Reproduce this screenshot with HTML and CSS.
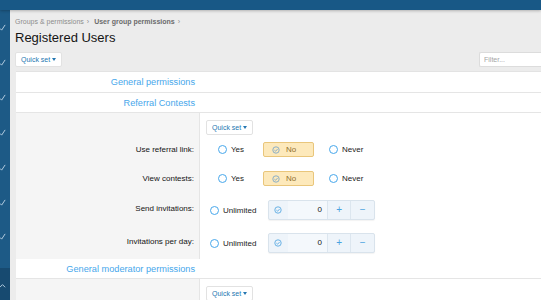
FILE: index.html
```html
<!DOCTYPE html>
<html lang="en">
<head>
    <meta charset="UTF-8">
    <title>Registered Users - User group permissions</title>
    <link rel="stylesheet" href="styles.css">
</head>
<body>
    <div class="topbar"></div>
    <div class="page">
        <aside class="sidebar">
            <ul class="nav">
                <li><svg viewBox="0 0 8 8"><path d="M1 5 L3 7 L7 1"/></svg></li>
                <li><svg viewBox="0 0 8 8"><path d="M1 5 L3 7 L7 1"/></svg></li>
                <li><svg viewBox="0 0 8 8"><path d="M1 5 L3 7 L7 1"/></svg></li>
                <li><svg viewBox="0 0 8 8"><path d="M1 5 L3 7 L7 1"/></svg></li>
                <li><svg viewBox="0 0 8 8"><path d="M1 5 L3 7 L7 1"/></svg></li>
                <li class="short"><svg viewBox="0 0 8 8"><path d="M1 5 L3 7 L7 1"/></svg></li>
                <li><svg viewBox="0 0 8 8"><path d="M1 5 L3 7 L7 1"/></svg></li>
            </ul>
            <div class="nav-open"><svg viewBox="0 0 8 8"><path d="M1 6 L4 3 L7 6"/></svg></div>
        </aside>

        <main class="content">
            <div class="breadcrumb">
                <a href="#">Groups &amp; permissions</a><span class="sep">›</span>
                <a href="#" class="strong">User group permissions</a><span class="sep">›</span>
            </div>
            <h1>Registered Users</h1>

            <div class="toolbar">
                <button class="quickset">Quick set <span class="caret"></span></button>
                <input class="filter" type="text" placeholder="Filter...">
            </div>

            <div class="block">
                <div class="block-head first"><h2>General permissions</h2></div>
                <div class="block-head"><h2>Referral Contests</h2></div>

                <div class="row qs-row">
                    <div class="label"></div>
                    <div class="field"><button class="quickset">Quick set <span class="caret"></span></button></div>
                </div>

                <div class="row">
                    <div class="label">Use referral link:</div>
                    <div class="field">
                        <label class="radio"><span class="dot"></span>Yes</label>
                        <label class="choice"><span class="tick"><svg viewBox="0 0 10 10"><circle cx="5" cy="5" r="4"/><path d="M3 5.2 L4.5 6.5 L7 3.8"/></svg></span>No</label>
                        <label class="radio"><span class="dot"></span>Never</label>
                    </div>
                </div>

                <div class="row">
                    <div class="label">View contests:</div>
                    <div class="field">
                        <label class="radio"><span class="dot"></span>Yes</label>
                        <label class="choice"><span class="tick"><svg viewBox="0 0 10 10"><circle cx="5" cy="5" r="4"/><path d="M3 5.2 L4.5 6.5 L7 3.8"/></svg></span>No</label>
                        <label class="radio"><span class="dot"></span>Never</label>
                    </div>
                </div>

                <div class="row spin-row">
                    <div class="label">Send invitations:</div>
                    <div class="field">
                        <label class="radio unlimited"><span class="dot"></span>Unlimited</label>
                        <div class="spinbox">
                            <span class="spin-check"><svg viewBox="0 0 10 10"><circle cx="5" cy="5" r="4"/><path d="M3 5.2 L4.5 6.5 L7 3.8"/></svg></span>
                            <span class="spin-value">0</span>
                            <span class="spin-btn">+</span>
                            <span class="spin-btn">−</span>
                        </div>
                    </div>
                </div>

                <div class="row spin-row">
                    <div class="label">Invitations per day:</div>
                    <div class="field">
                        <label class="radio unlimited"><span class="dot"></span>Unlimited</label>
                        <div class="spinbox">
                            <span class="spin-check"><svg viewBox="0 0 10 10"><circle cx="5" cy="5" r="4"/><path d="M3 5.2 L4.5 6.5 L7 3.8"/></svg></span>
                            <span class="spin-value">0</span>
                            <span class="spin-btn">+</span>
                            <span class="spin-btn">−</span>
                        </div>
                    </div>
                </div>

                <div class="block-head"><h2>General moderator permissions</h2></div>

                <div class="row qs-row">
                    <div class="label"></div>
                    <div class="field"><button class="quickset">Quick set <span class="caret"></span></button></div>
                </div>
            </div>
        </main>
    </div>
</body>
</html>
```

FILE: styles.css
```css
body { margin: 0; font-family: "Liberation Sans", Arial, sans-serif; font-size: 8px; color: #141414; background: #ececec; overflow: hidden; }
.topbar { height: 10px; background: #185886; box-shadow: 0 1px 3px rgba(0,0,0,.25); position: relative; z-index: 1; }
.page { display: flex; min-height: 290px; }

.sidebar { width: 10px; flex: none; background: #1d5a86; display: flex; flex-direction: column; }
.nav { list-style: none; margin: 0; padding: 14px 0 0; flex: 1; }
.nav li { height: 35px; }
.nav li.short { height: 34px; }
.nav svg, .nav-open svg { width: 7px; height: 7px; fill: none; stroke: #b7cfe2; stroke-width: 1.1; margin-left: -1px; }
.nav-open { background: #174a70; height: 48px; padding-top: 14px; box-sizing: border-box; }

.content { flex: 1; padding: 6px 0 0 5px; min-width: 0; }
.breadcrumb { color: #8c8c8c; font-size: 7px; height: 11px; line-height: 11px; }
.breadcrumb a { color: #8c8c8c; text-decoration: none; }
.breadcrumb a.strong { color: #6b6b6b; font-weight: bold; }
.breadcrumb .sep { margin: 0 3px; }
h1 { font-size: 13px; font-weight: normal; margin: 2px 0 0; height: 18px; line-height: 18px; }

.toolbar { display: flex; justify-content: space-between; align-items: center; margin-top: 5px; height: 15px; }
.quickset { font: inherit; font-size: 7px; color: #2577b1; background: #fff; border: 1px solid #e2e2e2; border-radius: 2px; height: 15px; padding: 0 5px; cursor: pointer; display: inline-flex; align-items: center; gap: 2px; }
.caret { border-left: 2.5px solid transparent; border-right: 2.5px solid transparent; border-top: 3px solid #2577b1; }
.filter { font: inherit; font-size: 7px; width: 62px; height: 15px; box-sizing: border-box; border: 1px solid #dcdcdc; border-right: 0; border-radius: 2px 0 0 2px; padding: 0 4px; background: #fff; }
.filter::placeholder { color: #a5a5a5; }

.block { margin: 4px 0 0 1px; background: #fff; border-top: 1px solid #e3e3e3; }
.block-head { display: grid; grid-template-columns: 183px 1fr; height: 19px; border-bottom: 1px solid #e5e5e5; }
.block-head.first { height: 20px; }
.block-head h2 { margin: 0; padding-right: 4px; font-size: 9.2px; font-weight: normal; color: #47a7eb; text-align: right; align-self: center; }

.row { display: grid; grid-template-columns: 183px 1fr; }
.row .label { background: #f5f5f5; text-align: right; padding-right: 5px; display: flex; align-items: center; justify-content: flex-end; }
.row .field { border-left: 1px solid #e5e5e5; padding: 7px 6px; display: flex; align-items: center; }
.qs-row .field { padding: 6px 6px 0; }
.qs-row { height: 22px; }
.spin-row .field { padding: 7px 10px 6px; }
.spin-row .label { padding-bottom: 3px; }

.radio { display: inline-flex; align-items: center; gap: 4px; margin-left: 12px; width: 45px; color: #222; }
.radio.unlimited { margin-left: 0; width: 58px; gap: 4px; }
.dot { width: 7px; height: 7px; border: 1px solid #47a7eb; border-radius: 50%; background: #fff; }
.choice { display: inline-flex; align-items: center; gap: 6px; width: 51px; height: 15px; box-sizing: border-box; padding-left: 8px; background: #fde9bb; border: 1px solid #e9c67b; border-radius: 2px; color: #8f6e30; margin-right: 15px; }
.tick svg, .spin-check svg { width: 8px; height: 8px; display: block; fill: none; stroke: #6f9fc8; stroke-width: 1; }
.choice + .radio { margin-left: 0; }

.spinbox { display: flex; height: 20px; width: 107px; box-sizing: border-box; border: 1px solid #d9e3ec; border-radius: 2px; background: #eef4fa; box-shadow: 0 1px 1px rgba(0,0,0,.05); }
.spin-check { width: 19px; display: flex; align-items: center; justify-content: center; }
.spin-check svg { stroke: #4aa2e0; }
.spin-value { width: 40px; background: #f4f8fc; text-align: right; padding-right: 5px; box-sizing: border-box; line-height: 18px; font-size: 8px; }
.spin-btn { width: 23px; text-align: center; line-height: 18px; color: #4aa2e0; font-size: 10px; border-left: 1px solid #dce6ef; }
```
